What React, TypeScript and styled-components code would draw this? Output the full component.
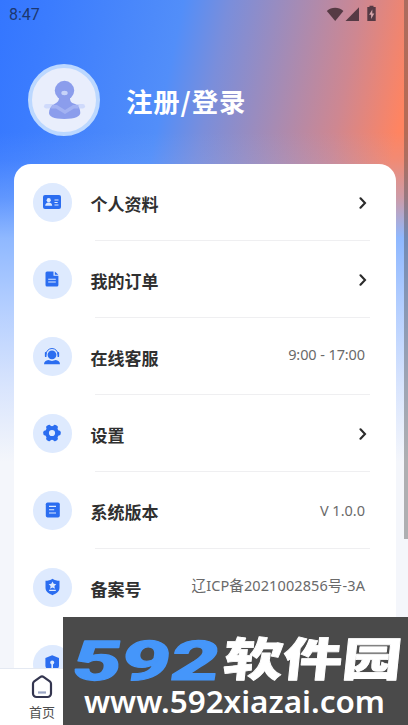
import React from 'react';
import styled, { createGlobalStyle } from 'styled-components';

const GlobalStyle = createGlobalStyle`
  * { box-sizing: border-box; }
  body { margin: 0; overflow: hidden; background: #f4f6fb; }
`;

const BLUE = '#2b6df0';
const PALE = '#deeafe';

const Screen = styled.div`
  position: relative;
  width: 408px;
  height: 725px;
  overflow: hidden;
  display: flex;
  flex-direction: column;
  font-family: 'Noto Sans', 'Noto Sans CJK SC', sans-serif;
  background:
    linear-gradient(180deg, rgba(143, 184, 255, 0) 132px, rgba(143, 184, 255, 0.12) 160px, rgba(143, 184, 255, 0.45) 198px, #8fb8ff 238px, #b3ceff 305px, #d8e4fd 385px, #f4f6fb 462px, #f4f6fb 100%),
    linear-gradient(102deg, #3476ff 0, #3b7cfe 50px, #528ef9 180px, #7a8edb 225px, #a78bb3 295px, #ce8791 355px, #ff8461 417px);
`;

const StatusBar = styled.header`
  flex: none;
  height: 28px;
  padding: 0 30px 0 9px;
  display: flex;
  align-items: center;
  justify-content: space-between;
  font: 400 16px/29px Roboto, sans-serif;
  color: #1c3770;
`;

const StatusIcons = styled.svg`
  display: block;
  width: 52px;
  height: 18px;
  margin-top: -1px;
  fill: #553a44;
`;

const Profile = styled.section`
  flex: none;
  height: 136px;
  padding: 36px 0 0 28px;
  display: flex;
  align-items: flex-start;
  gap: 26px;
`;

const Avatar = styled.div`
  width: 72px;
  height: 72px;
  border-radius: 50%;
  border: 4px solid #bcd8ff;
  background: #e9eefc;
`;

const Title = styled.h1`
  margin: 0;
  font: 700 26.4px/74px 'Noto Sans CJK SC', sans-serif;
  letter-spacing: 0.9px;
  color: #fff;
`;

const Card = styled.main`
  flex: none;
  width: 382px;
  height: 561px;
  margin-left: 14px;
  border-radius: 17px 17px 0 0;
  background: #fff;
  overflow: hidden;
`;

const Row = styled.div`
  height: 77px;
  padding: 0 26px 0 19px;
  display: flex;
  align-items: stretch;
`;

const Badge = styled.span`
  flex: none;
  width: 38.5px;
  height: 38.5px;
  margin-top: 19px;
  border-radius: 50%;
  background: ${PALE};
  display: grid;
  place-items: center;
  svg { display: block; }
`;

const RowBody = styled.div`
  flex: 1;
  margin-left: 23px;
  display: flex;
  justify-content: space-between;
  border-bottom: 1px solid #efeff1;
`;

const Label = styled.span`
  margin-left: -4px;
  font: 700 17px/80px 'Noto Sans CJK SC', sans-serif;
  color: #303030;
`;

const Value = styled.span<{ $line: number; $spacing?: number }>`
  padding-right: 5px;
  font-size: 14.5px;
  line-height: ${p => p.$line}px;
  letter-spacing: ${p => p.$spacing ?? 0}px;
  color: #6a6a6a;
  white-space: nowrap;
`;

const Chevron = styled.svg`
  width: 8px;
  height: 12px;
  margin: 32.5px 3px 0 0;
  fill: none;
  stroke: #2b2b2b;
  stroke-width: 2.1;
  stroke-linecap: round;
`;

const TabBar = styled.nav`
  position: absolute;
  left: 0;
  right: 0;
  bottom: 0;
  height: 57px;
  background: #fff;
  border-top: 1px solid #e4e9f2;
`;

const Tab = styled.div`
  width: 84px;
  padding-top: 6px;
  display: flex;
  flex-direction: column;
  align-items: center;
  font: 400 13px/18px 'Noto Sans CJK SC', sans-serif;
  color: #4f4f4f;
  gap: 4px;
`;

const Watermark = styled.div`
  position: absolute;
  left: 63px;
  right: 0;
  bottom: 0;
  height: 108px;
  background: #4a4a4a;
  svg { display: block; }
`;

const ScrollThumb = styled.div`
  position: absolute;
  top: 0;
  right: 0;
  width: 4px;
  height: 539px;
  background: rgba(70, 70, 70, 0.4);
`;

const IdIcon = () => (
  <svg width="18" height="14" viewBox="0 0 18 14">
    <rect width="18" height="14" rx="2" fill={BLUE} />
    <circle cx="5.7" cy="5.2" r="2.1" fill={PALE} />
    <path d="M2.2 10.8c0-2 1.4-2.8 2.6-3.2h1.8c1.2.4 2.6 1.2 2.6 3.2z" fill={PALE} />
    <path d="M11.5 5h4M11.5 7.5h3.2M11.5 10h4" stroke={PALE} strokeWidth="1" />
  </svg>
);

const OrderIcon = () => (
  <svg width="14" height="16" viewBox="0 0 14 16">
    <path d="M2 .5h6.5v4.2h4.9V14a1.5 1.5 0 0 1-1.5 1.5H2A1.5 1.5 0 0 1 .5 14V2A1.5 1.5 0 0 1 2 .5z" fill={BLUE} />
    <path d="M9.8.6l3.5 3.2H9.8z" fill={BLUE} />
    <path d="M3.2 8.2h7.6M3.2 11h7.6" stroke={PALE} strokeWidth="1.1" />
  </svg>
);

const ServiceIcon = () => (
  <svg width="18" height="18" viewBox="0 0 18 18">
    <circle cx="9" cy="7.8" r="4.4" fill={BLUE} />
    <path d="M3 7.5a6 6 0 0 1 12 0" fill="none" stroke={BLUE} strokeWidth="1" />
    <path d="M2.7 5.8v3.4M15.3 5.8v3.4" stroke={BLUE} strokeWidth="1.7" strokeLinecap="round" />
    <path d="M1 17.300c0-2.400 2-3.800 4.300-4.200 2.300 1.100 5.100 1.100 7.400 0C15 13.500 17 14.900 17 17.300z" fill={BLUE} />
  </svg>
);

const GearIcon = () => (
  <svg width="18" height="18" viewBox="0 0 18 18">
    <circle cx="9" cy="9" r="5" fill="none" stroke={BLUE} strokeWidth="3.8" />
    {[0, 60, 120, 180, 240, 300].map(a => (
      <rect key={a} x="13" y="6.5" width="4.700" height="5" rx="1.700" fill={BLUE} transform={`rotate(${a} 9 9)`} />
    ))}
  </svg>
);

const VersionIcon = () => (
  <svg width="15" height="16" viewBox="0 0 15 16">
    <rect x=".8" y=".5" width="14" height="15" rx="1.8" fill={BLUE} />
    <path d="M4 4.4h7M4 7.7h5.2M4 11h7" stroke={PALE} strokeWidth="1.1" />
  </svg>
);

const RecordIcon = () => (
  <svg width="16" height="18" viewBox="0 0 16 18">
    <path d="M8.500.7c2 1.400 4.500 2 7 2.100v7c0 4-3.600 6.100-7 7.400-3.400-1.300-7-3.400-7-7.400v-7c2.500-.1 5-.7 7-2.100z" fill={BLUE} />
    <path d="M8.500 3.500l1.200 2.300 2.600.4-1.900 1.900.5 2.600-2.400-1.200-2.400 1.200.5-2.600-1.900-1.900 2.600-.4zM5.200 11.700h6.600v1.200H5.200z" fill={PALE} />
  </svg>
);

const PrivacyIcon = () => (
  <svg width="16" height="18" viewBox="0 0 16 18">
    <path d="M8.200.3l6.800 2.600v7.800c0 3-3.500 5-6.800 6.500-3.300-1.500-6.800-3.500-6.800-6.500V2.900z" fill={BLUE} />
    <circle cx="8.200" cy="7.500" r="2" fill={PALE} />
    <path d="M8.200 8v5" stroke={PALE} strokeWidth="1.600" />
  </svg>
);

interface Item {
  label: string;
  Icon: () => React.JSX.Element;
  value?: string;
  line?: number;
  spacing?: number;
}

const items: Item[] = [
  { label: '个人资料', Icon: IdIcon },
  { label: '我的订单', Icon: OrderIcon },
  { label: '在线客服', Icon: ServiceIcon, value: '9:00 - 17:00', line: 72, spacing: -0.1 },
  { label: '设置', Icon: GearIcon },
  { label: '系统版本', Icon: VersionIcon, value: 'V 1.0.0', line: 77 },
  { label: '备案号', Icon: RecordIcon, value: '辽ICP备2021002856号-3A', line: 73, spacing: 0.1 },
  { label: '隐私政策', Icon: PrivacyIcon },
];

export default function App() {
  return (
    <Screen>
      <GlobalStyle />
      <StatusBar>
        <span>8:47</span>
        <StatusIcons viewBox="0 0 52 18">
          <path d="M.8 6c4.800-4.200 11.800-4.200 16.600 0L9.200 16z" />
          <path d="M33 2.200V16H19.500z" />
          <path d="M41.300 2h2.200V.8h4V2h2.200v14h-8.400z" />
          <path d="M46.300 4.400v4h2l-3.200 5.500V9.800h-2z" fill="#d5a4a9" />
        </StatusIcons>
      </StatusBar>
      <Profile>
        <Avatar>
          <svg width="64" height="64" viewBox="0 0 64 64">
            <rect x="12" y="36" width="41" height="4.600" rx="2.300" fill="#cfdafb" />
            <path d="M27 30h11c0 4 2 5 5 6 4 2 5.300 5 5.300 9 0 3-5 6-16 6s-15.300-3-15.300-6c0-4 2-7 5.500-9 3-1.500 4.500-3 4.500-6z" fill="#8b9dec" />
            <circle cx="32.500" cy="22.500" r="9.700" fill="#8b9dec" />
            <ellipse cx="32.500" cy="25" rx="3.200" ry="2.200" fill="#c7d3f8" />
            <path d="M20 37h5l8 5 8-5h5.500v3.500H42l-9 5.500-9-5.500h-5z" fill="#a3b2f2" />
          </svg>
        </Avatar>
        <Title>注册/登录</Title>
      </Profile>
      <Card>
        {items.map(({ label, Icon, value, line, spacing }) => (
          <Row key={label}>
            <Badge><Icon /></Badge>
            <RowBody>
              <Label>{label}</Label>
              {value ? (
                <Value $line={line ?? 77} $spacing={spacing}>{value}</Value>
              ) : (
                <Chevron viewBox="0 0 8 12"><path d="M1.500 1.300L6 6l-4.500 4.700" /></Chevron>
              )}
            </RowBody>
          </Row>
        ))}
      </Card>
      <TabBar>
        <Tab>
          <svg width="22" height="24" viewBox="0 0 22 24">
            <path d="M9.200 2.100a3 3 0 0 1 3.600 0l6 4.300A3 3 0 0 1 20 8.900V18.500a3.500 3.500 0 0 1-3.500 3.500h-11A3.500 3.500 0 0 1 2 18.500V8.900a3 3 0 0 1 1.200-2.500z" fill="none" stroke="#343650" strokeWidth="2.200" />
            <path d="M7 17.500h8" stroke="#9aa5c4" strokeWidth="2.200" />
          </svg>
          <span>首页</span>
        </Tab>
      </TabBar>
      <Watermark>
        <svg width="345" height="108" viewBox="0 0 345 108">
          <g strokeLinejoin="round">
            <text transform="translate(7 63) skewX(-9)" textLength="147" lengthAdjust="spacingAndGlyphs" fontFamily="Roboto, sans-serif" fontWeight="800" fontSize="55" fill="#4596fa" stroke="#4596fa" strokeWidth="1.200">592</text>
            <text transform="translate(159 58.500) skewX(-6)" textLength="178" lengthAdjust="spacingAndGlyphs" fontFamily="'Noto Sans CJK SC', sans-serif" fontWeight="900" fontSize="46" fill="#fff" stroke="#fff" strokeWidth=".8">软件园</text>
          </g>
          <text x="21" y="96" textLength="301" lengthAdjust="spacingAndGlyphs" fontFamily="'Noto Sans', sans-serif" fontWeight="600" fontSize="31" fill="#fff">www.592xiazai.com</text>
        </svg>
      </Watermark>
      <ScrollThumb />
    </Screen>
  );
}
